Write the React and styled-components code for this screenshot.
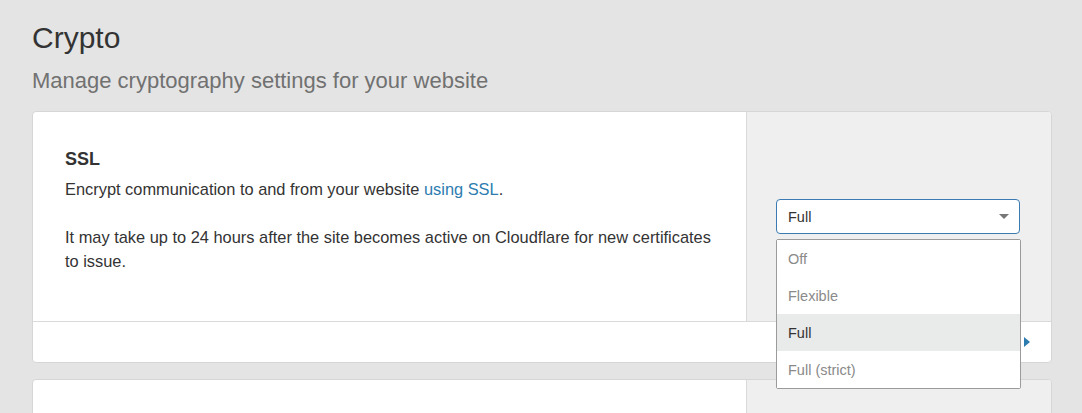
import React from "react";
import styled, { createGlobalStyle } from "styled-components";

const GlobalStyle = createGlobalStyle`
  html, body {
    margin: 0;
    padding: 0;
    overflow: hidden;
    background: #e4e4e4;
  }
  body {
    font-family: "Liberation Sans", Arial, sans-serif;
    color: #333;
  }
`;

const Page = styled.div`
  padding: 20px 30px 0 32px;
`;

const Title = styled.h1`
  margin: 0;
  font-size: 30px;
  line-height: 36px;
  font-weight: 400;
  color: #333;
`;

const Subtitle = styled.p`
  margin: 11px 0 16px;
  font-size: 22px;
  line-height: 28px;
  color: #717171;
`;

const Card = styled.section`
  position: relative;
  background: #fff;
  border: 1px solid #d6d6d6;
  border-radius: 4px;
  margin-bottom: 16px;
  min-height: ${(p) => p.minHeight || 0}px;
  display: flex;
  flex-direction: column;
`;

const CardBody = styled.div`
  display: grid;
  grid-template-columns: 1fr 305px;
  flex: 1;
`;

const Content = styled.div`
  padding: 35px 22px 48px 32px;
`;

const Heading = styled.h3`
  margin: 0 0 6px;
  font-size: 18px;
  line-height: 24px;
  font-weight: 700;
  color: #333;
`;

const Text = styled.p`
  margin: 0 0 24px;
  font-size: 16.4px;
  line-height: 24px;
  color: #333;
  &:last-child {
    margin-bottom: 0;
  }
`;

const Link = styled.a`
  color: #2c7cb0;
  text-decoration: none;
`;

const Control = styled.div`
  background: #efefef;
  border-left: 1px solid #dadada;
  border-top-right-radius: 3px;
  display: flex;
  align-items: center;
  padding: 0 31px 0 29px;
`;

const SelectWrap = styled.div`
  position: relative;
  width: 100%;
`;

const SelectBox = styled.div`
  height: 33px;
  box-sizing: content-box;
  border: 1px solid #3b7bb3;
  border-radius: 4px;
  background: #fff;
  display: flex;
  align-items: center;
  justify-content: space-between;
  padding: 0 10px 0 11px;
  font-size: 14.5px;
  color: #333;
`;

const Caret = styled.span`
  width: 0;
  height: 0;
  border-left: 5px solid transparent;
  border-right: 5px solid transparent;
  border-top: 5px solid #777;
`;

const Menu = styled.ul`
  position: absolute;
  z-index: 10;
  top: 40px;
  left: 0;
  right: -1px;
  margin: 0;
  padding: 0;
  list-style: none;
  background: #fff;
  border: 1px solid #9b9b9b;
  border-radius: 2px;
`;

const Option = styled.li`
  height: 37px;
  display: flex;
  align-items: center;
  padding-left: 11px;
  font-size: 14.5px;
  color: ${(p) => (p.active ? "#333" : "#8a8a8a")};
  background: ${(p) => (p.active ? "#e9eaea" : "#fff")};
`;

const Footer = styled.div`
  height: 40px;
  border-top: 1px solid #dadada;
  display: flex;
  align-items: center;
  justify-content: flex-end;
  padding-right: 21px;
  gap: 6px;
  font-size: 15px;
  color: #2c7cb0;
`;

const Arrow = styled.span`
  width: 0;
  height: 0;
  border-top: 5px solid transparent;
  border-bottom: 5px solid transparent;
  border-left: 6px solid #2c7cb0;
`;

const options = ["Off", "Flexible", "Full", "Full (strict)"];

export default function App() {
  const value = "Full";

  return (
    <>
      <GlobalStyle />
      <Page>
        <Title>Crypto</Title>
        <Subtitle>Manage cryptography settings for your website</Subtitle>

        <Card>
          <CardBody>
            <Content>
              <Heading>SSL</Heading>
              <Text>
                Encrypt communication to and from your website{" "}
                <Link href="#">using SSL</Link>.
              </Text>
              <Text>
                It may take up to 24 hours after the site becomes active on
                Cloudflare for new certificates to issue.
              </Text>
            </Content>
            <Control>
              <SelectWrap>
                <SelectBox>
                  <span>{value}</span>
                  <Caret />
                </SelectBox>
                <Menu>
                  {options.map((o) => (
                    <Option key={o} active={o === value}>
                      {o}
                    </Option>
                  ))}
                </Menu>
              </SelectWrap>
            </Control>
          </CardBody>
          <Footer>
            <span>Help</span>
            <Arrow />
          </Footer>
        </Card>

        <Card minHeight={200}>
          <CardBody>
            <Content />
            <Control />
          </CardBody>
        </Card>
      </Page>
    </>
  );
}
